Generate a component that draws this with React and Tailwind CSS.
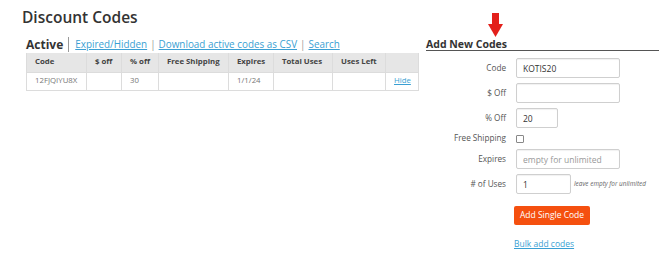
import React from 'react';

const cols = [
  { label: 'Code', w: 'w-[60px]' },
  { label: '$ off', w: 'w-[35px]' },
  { label: '% off', w: 'w-[37px]' },
  { label: 'Free Shipping', w: 'w-[70px]' },
  { label: 'Expires', w: 'w-[45px]' },
  { label: 'Total Uses', w: 'w-[59px]' },
  { label: 'Uses Left', w: 'w-[53px]' },
  { label: '', w: 'w-[33px]' },
];

const row = ['12FJQIYU8X', '', '30', '', '1/1/24', '', ''];

function Field({ label, children }) {
  return (
    <div className="flex items-center">
      <div className="w-[80px] text-right text-[8.2px] text-[#555]">{label}</div>
      <div className="ml-[10px] flex items-center">{children}</div>
    </div>
  );
}

function TextInput({ w, value, placeholder }) {
  return (
    <input
      readOnly
      value={value}
      placeholder={placeholder}
      className={`${w} h-[20px] rounded-[2px] border border-[#cfcfcf] bg-white px-[6px] text-[8.5px] text-[#333] placeholder:text-[#999] shadow-[inset_0_1px_1px_rgba(0,0,0,0.06)] outline-none`}
    />
  );
}

export default function App() {
  return (
    <div className="relative w-[670px] h-[270px] bg-white pl-[22px] pt-[6px] font-['Open_Sans',sans-serif] text-[#333]">
      <h1 className="text-[15.5px] font-semibold leading-[22px] text-[#333]">Discount Codes</h1>

      <div className="mt-[8px] flex">
        {/* Codes list */}
        <div className="ml-[4px] w-[392px]">
          <div className="flex h-[17px] items-center whitespace-nowrap text-[9.9px] leading-none">
            <span className="text-[12px] font-bold text-[#333]">Active</span>
            <span className="ml-[5px] mr-[6px] h-[15px] w-px bg-[#999]" />
            <a className="text-[#3a9fd3] underline underline-offset-1">Expired/Hidden</a>
            <span className="mx-[3px] text-[#999]">|</span>
            <a className="text-[#3a9fd3] underline underline-offset-1">Download active codes as CSV</a>
            <span className="mx-[3px] text-[#999]">|</span>
            <a className="text-[#3a9fd3] underline underline-offset-1">Search</a>
          </div>
          <table className="w-[392px] table-fixed border-collapse whitespace-nowrap text-[7.8px]">
            <colgroup>
              {cols.map((c, i) => (
                <col key={i} className={c.w} />
              ))}
            </colgroup>
            <thead>
              <tr className="h-[19px] bg-[#e6e6e6]">
                {cols.map((c, i) => (
                  <th
                    key={i}
                    className="border-x border-[#dcdcdc] px-[8px] text-left font-bold text-[#444]"
                  >
                    {c.label}
                  </th>
                ))}
              </tr>
            </thead>
            <tbody>
              <tr className="h-[18px]">
                {row.map((v, i) => (
                  <td key={i} className="border border-[#dcdcdc] px-[8px] text-[#777]">
                    {v}
                  </td>
                ))}
                <td className="border border-[#dcdcdc] px-[8px] text-right">
                  <a className="text-[#3a9fd3] underline">Hide</a>
                </td>
              </tr>
            </tbody>
          </table>
        </div>

        {/* Add form */}
        <div className="ml-[8px] w-[233px]">
          <div className="flex h-[15px] items-end border-b-[1.5px] border-[#555] pb-[1px]">
            <span className="text-[10.5px] font-bold leading-none text-[#333]">Add New Codes</span>
          </div>
          <div className="mt-[7px] flex flex-col gap-[5px]">
            <Field label="Code">
              <TextInput w="w-[104px]" value="KOTIS20" />
            </Field>
            <Field label="$ Off">
              <TextInput w="w-[104px]" value="" />
            </Field>
            <Field label="% Off">
              <TextInput w="w-[42px]" value="20" />
            </Field>
            <div className="flex h-[11px] items-center">
              <div className="w-[80px] text-right text-[8.2px] text-[#555]">Free Shipping</div>
              <span className="ml-[10px] h-[8px] w-[8px] rounded-[1px] border border-[#888] bg-white" />
            </div>
            <Field label="Expires">
              <TextInput w="w-[104px]" value="" placeholder="empty for unlimited" />
            </Field>
            <Field label="# of Uses">
              <TextInput w="w-[55px]" value="1" />
              <span className="ml-[3px] text-[6.4px] italic text-[#666]">leave empty for unlimited</span>
            </Field>
          </div>
          <button className="ml-[88px] mt-[12px] h-[19px] w-[76px] rounded-[2px] bg-[#f5500f] text-[8.5px] text-white">
            Add Single Code
          </button>
          <div className="ml-[88px] mt-[11px] leading-[10px]">
            <a className="text-[8.5px] text-[#3a9fd3] underline">Bulk add codes</a>
          </div>
        </div>
      </div>

      {/* Red pointer arrow */}
      <svg className="absolute left-[488px] top-[13px]" width="15" height="24" viewBox="0 0 15 24">
        <rect x="4" y="0" width="7" height="12" fill="#e3201b" />
        <polygon points="0,11 15,11 7.5,24" fill="#e3201b" />
      </svg>
    </div>
  );
}
